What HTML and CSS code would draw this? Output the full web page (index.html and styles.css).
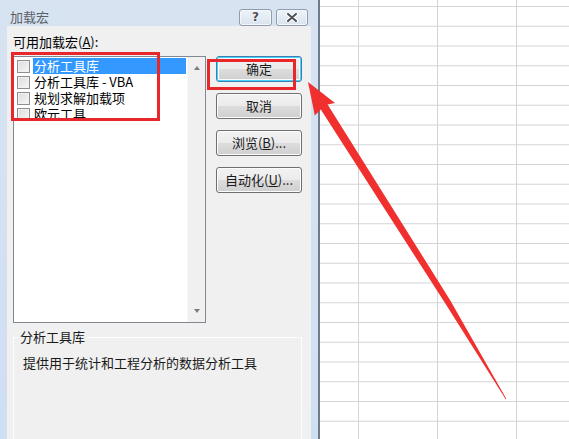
FILE: index.html
```html
<!DOCTYPE html>
<html lang="zh-CN">
<head>
    <meta charset="UTF-8">
    <meta name="viewport" content="width=device-width, initial-scale=1.0">
    <title>加载宏</title>
    <link rel="stylesheet" href="styles.css">
</head>
<body>

    <div class="screen">

        <div class="dialog">
            <div class="titlebar">
                <span class="title">加载宏</span>
                <div class="caption-buttons">
                    <span class="cap-btn help">?</span>
                    <span class="cap-btn close">
                        <svg width="12" height="9" viewBox="0 0 12 9">
                            <path d="M2 1 L10 8 M10 1 L2 8" stroke="#fff" stroke-width="4" stroke-linecap="round"/>
                            <path d="M2 1 L10 8 M10 1 L2 8" stroke="#4b4f55" stroke-width="2" stroke-linecap="round"/>
                        </svg>
                    </span>
                </div>
            </div>

            <div class="client">
                <div class="field-label">可用加载宏(<u>A</u>):</div>

                <div class="main-row">
                    <div class="listbox">
                        <ul class="items">
                            <li class="item selected"><span class="check"></span><span class="item-text">分析工具库</span></li>
                            <li class="item"><span class="check"></span><span class="item-text">分析工具库 - VBA</span></li>
                            <li class="item"><span class="check"></span><span class="item-text">规划求解加载项</span></li>
                            <li class="item"><span class="check"></span><span class="item-text">欧元工具</span></li>
                        </ul>
                        <div class="scrollbar">
                            <span class="arrow up"></span>
                            <span class="arrow down"></span>
                        </div>
                    </div>

                    <div class="buttons">
                        <div class="btn default">确定</div>
                        <div class="btn">取消</div>
                        <div class="btn">浏览(<u>B</u>)...</div>
                        <div class="btn">自动化(<u>U</u>)...</div>
                    </div>
                </div>

                <fieldset class="desc">
                    <legend>分析工具库</legend>
                    <p>提供用于统计和工程分析的数据分析工具</p>
                </fieldset>
            </div>
        </div>

        <div class="sheet"></div>

        <!-- annotation marks drawn over the screenshot -->
        <svg class="marks" width="569" height="439" viewBox="0 0 569 439">
            <rect x="12.5" y="53.5" width="146" height="66" fill="none" stroke="#e8272d" stroke-width="3"/>
            <rect x="208.5" y="60.5" width="86" height="28" fill="none" stroke="#e8272d" stroke-width="3"/>
            <polygon fill="#f0302f" points="308,82 335,103 327.6,104.6 450,300 506.3,398.8 505.7,399.2 445,303 320.8,109.6 314.8,115.5"/>
        </svg>
    </div>

</body>
</html>
```

FILE: styles.css
```css
body{
    margin: 0;
    font-family: "Noto Sans CJK SC", "Noto Sans", sans-serif;
    font-size: 13px;
    color: #000;
}

.screen{
    position: relative;
    display: flex;
    height: 439px;
    overflow: hidden;
}

/* dialog window */
.dialog{
    flex: none;
    width: 318px;
    border-right: 2px solid #6f7b88;
    background: linear-gradient(#d7e3f1, #cfdff2);
    display: flex;
    flex-direction: column;
}

.titlebar{
    height: 31px;
    display: flex;
    justify-content: space-between;
    align-items: flex-start;
    padding: 0 10px;
    box-sizing: border-box;
}

.title{
    padding-top: 8px;
    line-height: 18px;
    font-size: 13px;
    color: #5a6068;
}

.caption-buttons{
    display: flex;
    gap: 4px;
    padding-top: 9px;
}

.cap-btn{
    width: 31px;
    height: 15px;
    border: 1px solid #8e9cae;
    border-radius: 3px;
    background: linear-gradient(#eef3f9, #d9e3ef);
    display: flex;
    align-items: center;
    justify-content: center;
    box-shadow: inset 0 0 0 1px #f4f8fc;
}

.cap-btn.help{
    font-family: "DejaVu Sans", sans-serif;
    font-weight: bold;
    font-size: 12px;
    line-height: 15px;
    color: #4b4f55;
    text-shadow: 0 0 2px #fff, 0 0 1px #fff;
}

.cap-btn.close{
    width: 30px;
}

.client{
    flex: 1;
    margin: 0 7px;
    background: #f0f0f0;
    padding: 8px 9px 0 6px;
}

.field-label{
    line-height: 16px;
    margin-bottom: 6px;
}

.main-row{
    display: flex;
    gap: 10px;
}

/* list of add-ins */
.listbox{
    width: 191px;
    height: 265px;
    border: 1px solid #828790;
    background: #fff;
    display: flex;
}

.items{
    flex: 1;
    list-style: none;
    margin: 0;
    padding: 1px 1px 0 3px;
}

.item{
    display: flex;
    align-items: center;
    height: 16px;
}

.check{
    flex: none;
    width: 11px;
    height: 11px;
    border: 1px solid #8f8f8f;
    background: linear-gradient(135deg, #dcdcdc, #f6f6f6);
    box-shadow: inset 0 0 0 1px #f1f1f1;
    margin-right: 3px;
}

.item-text{
    flex: 1;
    line-height: 16px;
    padding-left: 1px;
    white-space: nowrap;
}

.item.selected .item-text{
    background: #3399ff;
    color: #fff;
}

.scrollbar{
    flex: none;
    width: 18px;
    background: #f0f0f0;
    border-left: 1px solid #f7f7f7;
    display: flex;
    flex-direction: column;
    justify-content: space-between;
    align-items: center;
    padding: 9px 0 9px;
    box-sizing: border-box;
}

.arrow{
    width: 0;
    height: 0;
    border-left: 3.5px solid transparent;
    border-right: 3.5px solid transparent;
}

.arrow.up{
    border-bottom: 4px solid #7d7d7d;
}

.arrow.down{
    border-top: 4px solid #7d7d7d;
}

/* command buttons */
.buttons{
    display: flex;
    flex-direction: column;
    gap: 11px;
    width: 86px;
}

.btn{
    height: 24px;
    border: 1px solid #707070;
    border-radius: 3px;
    background: linear-gradient(#f2f2f2 0%, #ebebeb 50%, #dddddd 50%, #cfcfcf 100%);
    box-shadow: inset 0 0 0 1px #fcfcfc;
    text-align: center;
    line-height: 24px;
    color: #1a1a1a;
}

.btn.default{
    border-color: #3c7fb1;
    box-shadow: inset 0 0 0 1px #48d0fd, inset 0 0 0 2px #f8fcff;
}

/* description group box */
.desc{
    margin: 6px 0 0 0;
    padding: 0 0 0 4px;
    height: 120px;
    border: 1px solid #fdfdfd;
    border-bottom: none;
}

.desc legend{
    padding: 0 2px;
    line-height: 16px;
    color: #1a1a1a;
}

.desc p{
    margin: 10px 0 0 5px;
    line-height: 16px;
    color: #1a1a1a;
}

/* excel sheet behind */
.sheet{
    flex: 1;
    background-color: #fff;
    background-image:
        linear-gradient(#d2d4d6 1px, transparent 1px),
        linear-gradient(90deg, #d2d4d6 1px, transparent 1px);
    background-size: 79px 19.75px;
    background-position: 38px 6px;
}

.marks{
    position: absolute;
    left: 0;
    top: 0;
    pointer-events: none;
}
```
